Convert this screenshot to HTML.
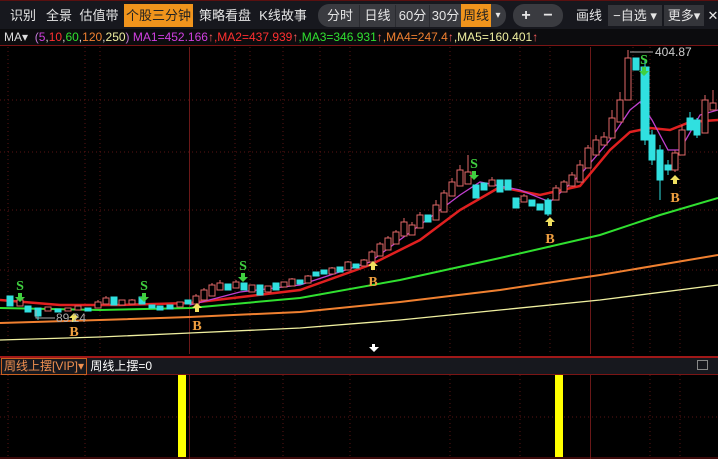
<!DOCTYPE html><html><head><meta charset="utf-8"><style>
*{margin:0;padding:0;box-sizing:border-box}
body{width:718px;height:459px;background:#000;overflow:hidden;font-family:"Liberation Sans","Noto Sans CJK SC",sans-serif;position:relative}
.tb{position:absolute;left:0;top:0;width:718px;height:29px;background:#17181e;border-top:1px solid #5a1010}
.t{position:absolute;top:4px;height:22px;line-height:22px;font-size:13px;color:#e6e6e6;text-align:center}
.pill{position:absolute;top:3px;height:23px;background:#3a3b40;border-radius:11px}
.box{position:absolute;top:4px;height:21px;background:#34353a}
.ma{position:absolute;left:0;top:29px;width:718px;height:17px;background:#0c0c0e;font-size:12px;line-height:17px;padding-left:4px;color:#ddd;white-space:nowrap;border-bottom:1px solid #7a1515}
.ih{position:absolute;left:0;top:356px;width:718px;height:19px;background:#17181e;border-top:2px solid #a01818;border-bottom:1px solid #7a1515;font-size:12px;line-height:16px;color:#fff}
</style></head><body>
<div class="tb">
<div class="t" style="left:8px;width:30px">识别</div>
<div class="t" style="left:44px;width:30px">全景</div>
<div class="t" style="left:79px;width:40px">估值带</div>
<div class="t" style="left:124px;width:69px;background:#f0941c;color:#222;top:3px;height:23px;line-height:23px">个股三分钟</div>
<div class="t" style="left:199px;width:52px">策略看盘</div>
<div class="t" style="left:258px;width:50px">K线故事</div>
<div class="pill" style="left:318px;width:188px"></div>
<div class="t" style="left:322px;width:36px">分时</div>
<div class="t" style="left:359px;width:36px;border-left:1px solid #2a2b30">日线</div>
<div class="t" style="left:395px;width:34px;border-left:1px solid #2a2b30">60分</div>
<div class="t" style="left:429px;width:32px;border-left:1px solid #2a2b30">30分</div>
<div class="t" style="left:461px;width:30px;background:#f0941c;color:#222;top:3px;height:23px;line-height:23px">周线</div>
<div class="t" style="left:491px;width:14px;font-size:10px">▾</div>
<div class="pill" style="left:513px;width:50px"></div>
<div class="t" style="left:517px;width:18px;font-size:16px;font-weight:bold">+</div>
<div class="t" style="left:539px;width:18px;font-size:16px;font-weight:bold">−</div>
<div class="t" style="left:573px;width:32px">画线</div>
<div class="box" style="left:608px;width:54px"></div>
<div class="t" style="left:608px;width:54px">−自选 ▾</div>
<div class="box" style="left:664px;width:40px"></div>
<div class="t" style="left:664px;width:40px">更多▾</div>
<div class="t" style="left:707px;width:12px">✕</div>
</div>
<div class="ma">MA▾&nbsp; <span style="color:#c57ad8">(</span><span style="color:#d040e0">5</span>,<span style="color:#ff3030">10</span>,<span style="color:#30e030">60</span>,<span style="color:#f08030">120</span>,<span style="color:#f0f0a0">250</span><span style="color:#c57ad8">)</span> <span style="color:#d040e0">MA1=452.166</span><span style="color:#ff6060">↑</span><span style="color:#ff3030">,MA2=437.939</span><span style="color:#ff6060">↑</span><span style="color:#30e030">,MA3=346.931</span><span style="color:#ff6060">↑</span><span style="color:#f08030">,MA4=247.4</span><span style="color:#ff6060">↑</span><span style="color:#f0f0a0">,MA5=160.401</span><span style="color:#ff6060">↑</span></div>
<svg style="position:absolute;left:0;top:47px" width="718" height="309" viewBox="0 47 718 309">
<g stroke="#5a1414" stroke-dasharray="1 3" stroke-width="1">
<line x1="0" y1="100" x2="718" y2="100"/><line x1="0" y1="152" x2="718" y2="152"/><line x1="0" y1="210" x2="718" y2="210"/><line x1="0" y1="270" x2="718" y2="270"/>
<line x1="8" y1="47" x2="8" y2="354"/><line x1="85" y1="47" x2="85" y2="354"/><line x1="100" y1="47" x2="100" y2="354"/><line x1="235" y1="47" x2="235" y2="354"/><line x1="250" y1="47" x2="250" y2="354"/><line x1="283" y1="47" x2="283" y2="354"/><line x1="320" y1="47" x2="320" y2="354"/><line x1="350" y1="47" x2="350" y2="354"/><line x1="450" y1="47" x2="450" y2="354"/><line x1="520" y1="47" x2="520" y2="354"/><line x1="550" y1="47" x2="550" y2="354"/><line x1="633" y1="47" x2="633" y2="354"/><line x1="650" y1="47" x2="650" y2="354"/><line x1="680" y1="47" x2="680" y2="354"/>
</g>
<line x1="189.5" y1="47" x2="189.5" y2="354" stroke="#6a1818"/><line x1="590.5" y1="47" x2="590.5" y2="354" stroke="#6a1818"/>
<g fill="none" stroke-width="1.3">
<polyline stroke="#f0f0a0" points="0,340 100,337 190,333 300,328 400,320 500,310 600,300 718,285"/>
<polyline stroke="#f08030" stroke-width="2" points="0,323 100,320 190,317 300,312 400,302 500,290 600,275 718,255"/>
<polyline stroke="#30e030" stroke-width="2" points="0,308 100,310 190,308 300,298 400,280 500,258 600,235 660,215 718,198"/>
<polyline stroke="#e02020" stroke-width="2.5" points="0,300 60,305 120,305 190,303 250,296 300,290 370,265 420,240 460,210 500,187 540,195 580,186 610,150 630,132 650,128 670,130 690,122 718,120"/>
<polyline stroke="#c040d0" points="190,305 240,292 300,285 370,262 420,225 460,195 480,182 520,190 550,202 580,175 610,140 630,110 640,102 652,120 668,150 680,150 700,115 718,110"/>
</g>
<g stroke="#e06868" fill="#000" stroke-width="1">
<path d="M20 300V306M48 307V311M68 308V311M78 306V310M98 300V308M106 296V304M122 300V305M132 299V304M180 302V307M196 294V304M204 288V300M212 283V296M220 280V290M236 280V288M252 285V292M268 286V292M284 282V287M292 278V286M308 275V283M332 267V274M348 261V270M364 259V266M372 250V262M380 242V256M388 236V250M396 230V244M404 218V236M412 222V235M420 212V228M436 200V220M444 190V212M452 178V196M460 165V186M468 155V184M492 177V186M524 194V202M556 185V200M564 180V192M572 172V186M580 160V182M588 145V168M596 135V155M604 132V145M612 110V138M620 92V122M628 50V100M675 150V172M682 125V155M705 95V133M713 90V110"/>
<rect x="17" y="300" width="6" height="6"/><rect x="45" y="307" width="6" height="4"/><rect x="65" y="308" width="6" height="3"/><rect x="75" y="306" width="6" height="4"/><rect x="95" y="302" width="6" height="6"/><rect x="103" y="298" width="6" height="6"/><rect x="119" y="300" width="6" height="5"/><rect x="129" y="300" width="6" height="4"/><rect x="177" y="302" width="6" height="5"/><rect x="193" y="296" width="6" height="8"/><rect x="201" y="290" width="6" height="10"/><rect x="209" y="285" width="6" height="11"/><rect x="217" y="283" width="6" height="7"/><rect x="233" y="282" width="6" height="6"/><rect x="249" y="285" width="6" height="7"/><rect x="265" y="286" width="6" height="6"/><rect x="281" y="282" width="6" height="5"/><rect x="289" y="279" width="6" height="7"/><rect x="305" y="276" width="6" height="7"/><rect x="329" y="268" width="6" height="6"/><rect x="345" y="262" width="6" height="8"/><rect x="361" y="260" width="6" height="6"/><rect x="369" y="252" width="6" height="10"/><rect x="377" y="244" width="6" height="12"/><rect x="385" y="238" width="6" height="12"/><rect x="393" y="232" width="6" height="12"/><rect x="401" y="222" width="6" height="14"/><rect x="409" y="225" width="6" height="10"/><rect x="417" y="215" width="6" height="13"/><rect x="433" y="205" width="6" height="15"/><rect x="441" y="193" width="6" height="19"/><rect x="449" y="182" width="6" height="14"/><rect x="457" y="170" width="6" height="16"/><rect x="465" y="172" width="6" height="12"/><rect x="489" y="180" width="6" height="6"/><rect x="521" y="196" width="6" height="6"/><rect x="553" y="188" width="6" height="12"/><rect x="561" y="182" width="6" height="10"/><rect x="569" y="175" width="6" height="11"/><rect x="577" y="165" width="6" height="17"/><rect x="585" y="148" width="6" height="20"/><rect x="593" y="140" width="6" height="15"/><rect x="601" y="137" width="6" height="8"/><rect x="609" y="118" width="6" height="20"/><rect x="617" y="100" width="6" height="22"/><rect x="625" y="58" width="6" height="42"/><rect x="672" y="153" width="6" height="17"/><rect x="679" y="130" width="6" height="25"/><rect x="702" y="100" width="6" height="33"/><rect x="710" y="103" width="6" height="7"/>
</g>
<g stroke="#30e0e0" fill="#30e0e0">
<path d="M38 308V320M548 198V216M645 60V145M652 130V165M660 145V200M668 160V175M690 112V130M697 118V138"/>
<rect x="7" y="296" width="6" height="10"/><rect x="25" y="306" width="6" height="6"/><rect x="35" y="308" width="6" height="8"/><rect x="55" y="309" width="6" height="3"/><rect x="85" y="308" width="6" height="3"/><rect x="111" y="297" width="6" height="8"/><rect x="139" y="297" width="6" height="7"/><rect x="149" y="305" width="6" height="3"/><rect x="157" y="306" width="6" height="4"/><rect x="167" y="305" width="6" height="4"/><rect x="185" y="300" width="6" height="4"/><rect x="225" y="284" width="6" height="6"/><rect x="241" y="283" width="6" height="7"/><rect x="257" y="285" width="6" height="10"/><rect x="273" y="283" width="6" height="7"/><rect x="297" y="280" width="6" height="4"/><rect x="313" y="272" width="6" height="4"/><rect x="321" y="270" width="6" height="4"/><rect x="337" y="267" width="6" height="5"/><rect x="353" y="264" width="6" height="4"/><rect x="425" y="215" width="6" height="7"/><rect x="473" y="185" width="6" height="13"/><rect x="481" y="183" width="6" height="7"/><rect x="497" y="180" width="6" height="12"/><rect x="505" y="180" width="6" height="10"/><rect x="513" y="198" width="6" height="10"/><rect x="529" y="200" width="6" height="6"/><rect x="537" y="204" width="6" height="6"/><rect x="545" y="200" width="6" height="14"/><rect x="633" y="58" width="6" height="12"/><rect x="641" y="67" width="8" height="73"/><rect x="649" y="135" width="6" height="25"/><rect x="657" y="150" width="6" height="30"/><rect x="665" y="165" width="6" height="5"/><rect x="687" y="118" width="6" height="12"/><rect x="694" y="120" width="6" height="15"/>
</g>
<g font-family="Liberation Serif,serif" font-size="14" font-weight="bold" text-anchor="middle">
<text x="20" y="290" fill="#40d040">S</text><text x="144" y="290" fill="#40d040">S</text><text x="243" y="270" fill="#40d040">S</text><text x="474" y="168" fill="#40d040">S</text><text x="644" y="64" fill="#40d040">S</text>
<text x="74" y="336" fill="#f0a040">B</text><text x="197" y="330" fill="#f0a040">B</text><text x="373" y="286" fill="#f0a040">B</text><text x="550" y="243" fill="#f0a040">B</text><text x="675" y="202" fill="#f0a040">B</text>
</g>
<g fill="#40d040"><path d="M18 293h4v4h3l-5 5-5-5h3z"/><path d="M142 293h4v4h3l-5 5-5-5h3z"/><path d="M241 273h4v4h3l-5 5-5-5h3z"/><path d="M472 171h4v4h3l-5 5-5-5h3z"/><path d="M642 67h4v4h3l-5 5-5-5h3z"/></g>
<g fill="#f0e060"><path d="M72 322h4v-4h3l-5-5-5 5h3z"/><path d="M195 312h4v-4h3l-5-5-5 5h3z"/><path d="M371 270h4v-4h3l-5-5-5 5h3z"/><path d="M548 226h4v-4h3l-5-5-5 5h3z"/><path d="M673 184h4v-4h3l-5-5-5 5h3z"/></g>
<path d="M372 347h3v-3h-3zM369 347l5 5 5-5z" fill="#fff"/>
<polyline points="36,310 36,318 55,318" stroke="#aaa" fill="none"/>
<text x="56" y="322" fill="#aaa" font-size="12">89.24</text>
<line x1="630" y1="52" x2="653" y2="52" stroke="#aaa"/>
<text x="655" y="56" fill="#ccc" font-size="12">404.87</text>
</svg>
<div class="ih"><span style="display:inline-block;margin:0 0 0 1px;padding:0 2px;border:1px solid #c86020;color:#f09050;line-height:15px">周线上摆[VIP]▾</span> 周线上摆=0<span style="position:absolute;right:10px;top:2px;width:11px;height:10px;border:1px solid #888"></span></div>
<svg style="position:absolute;left:0;top:375px" width="718" height="84">
<g stroke="#5a1414" stroke-dasharray="1 3"><line x1="0" y1="42" x2="718" y2="42"/><line x1="8" y1="0" x2="8" y2="84"/><line x1="85" y1="0" x2="85" y2="84"/><line x1="235" y1="0" x2="235" y2="84"/><line x1="283" y1="0" x2="283" y2="84"/><line x1="350" y1="0" x2="350" y2="84"/><line x1="450" y1="0" x2="450" y2="84"/><line x1="520" y1="0" x2="520" y2="84"/><line x1="650" y1="0" x2="650" y2="84"/><line x1="680" y1="0" x2="680" y2="84"/></g>
<line x1="189.5" y1="0" x2="189.5" y2="84" stroke="#6a1818"/><line x1="590.5" y1="0" x2="590.5" y2="84" stroke="#6a1818"/>
<rect x="178" y="0" width="8" height="82" fill="#ffff00"/><rect x="555" y="0" width="8" height="82" fill="#ffff00"/>
<line x1="0" y1="83" x2="718" y2="83" stroke="#7a1515"/>
</svg>
</body></html>
